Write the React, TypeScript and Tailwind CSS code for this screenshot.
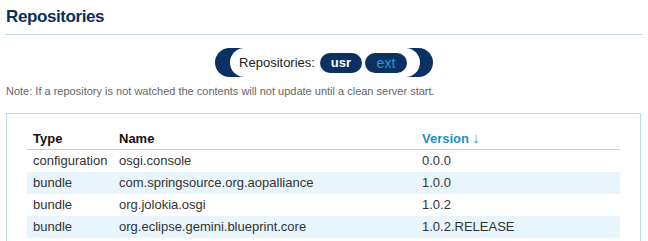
const rows = [
  { type: 'configuration', name: 'osgi.console', version: '0.0.0' },
  { type: 'bundle', name: 'com.springsource.org.aopalliance', version: '1.0.0' },
  { type: 'bundle', name: 'org.jolokia.osgi', version: '1.0.2' },
  { type: 'bundle', name: 'org.eclipse.gemini.blueprint.core', version: '1.0.2.RELEASE' },
];

export default function App() {
  return (
    <div className="w-[648px] h-[241px] overflow-hidden bg-white text-[#333] font-['Liberation_Sans',Arial,sans-serif]">
      {/* Heading */}
      <h1 className="pt-[7px] pl-[6px] text-[17px] leading-[20px] font-bold tracking-[-0.4px] text-[#0c2f5c]">
        Repositories
      </h1>
      <div className="mx-[5px] mt-[7px] h-px bg-[#c3d7e5]" />

      {/* Repository switcher */}
      <div className="mt-[13px] flex justify-center">
        <div className="flex items-center h-[29px] rounded-full bg-[#0b3162] pl-[15px] pr-[13px]">
          <div className="flex items-center h-[29px] rounded-full bg-white pl-[9px] pr-[13px]">
            <span className="text-[13px] text-[#222] mr-[5px]">Repositories:</span>
            <button className="h-[20px] w-[42px] rounded-full bg-[#0b3162] text-white text-[13px] font-bold leading-[20px]">
              usr
            </button>
            <button className="ml-[3px] h-[20px] w-[42px] rounded-full bg-[#0b3162] text-[#1f9ad6] text-[14px] leading-[20px]">
              ext
            </button>
          </div>
        </div>
      </div>

      <p className="mt-[8px] pl-[6px] text-[11px] leading-[13px] text-[#666]">
        Note: If a repository is not watched the contents will not update until a clean server start.
      </p>

      {/* Table box */}
      <div className="mt-[15px] ml-[6px] w-[635px] h-[200px] border border-[#b8dcef] px-[20px] pt-[14px]">
        <table className="w-[593px] border-collapse text-[13px] text-left">
          <thead>
            <tr className="h-[21px] border-b border-[#bfd3df]">
              <th className="w-[86px] pl-[6px] font-bold text-[#111]">Type</th>
              <th className="w-[303px] pl-[6px] font-bold text-[#111]">Name</th>
              <th className="pl-[6px] font-bold text-[#1b8fc9]">
                Version <span className="font-normal text-[14px]">↓</span>
              </th>
            </tr>
          </thead>
          <tbody>
            {rows.map((r, i) => (
              <tr key={r.name} className={`h-[22px] ${i % 2 === 1 ? 'bg-[#e8f5fd]' : 'bg-white'}`}>
                <td className="pl-[6px]">{r.type}</td>
                <td className="pl-[6px]">{r.name}</td>
                <td className="pl-[6px]">{r.version}</td>
              </tr>
            ))}
          </tbody>
        </table>
      </div>
    </div>
  );
}
